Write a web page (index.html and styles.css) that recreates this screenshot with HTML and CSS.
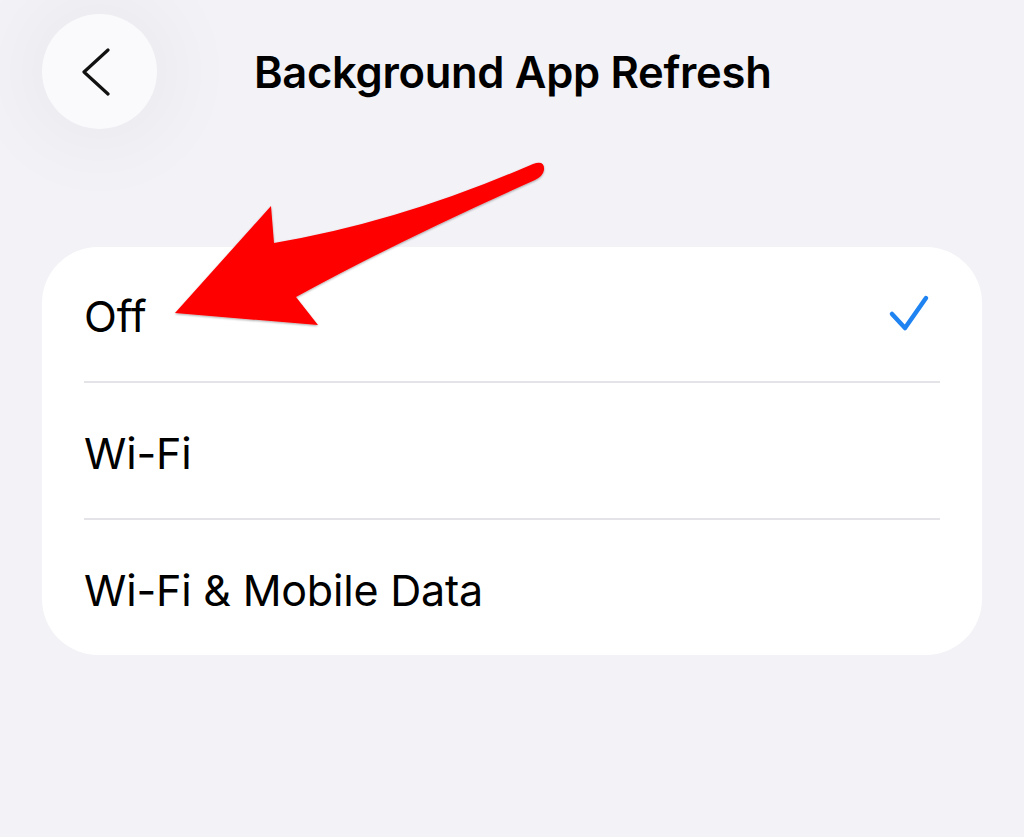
FILE: index.html
```html
<!DOCTYPE html>
<html>
<head>
<meta charset="utf-8">
<link rel="stylesheet" href="styles.css">
</head>
<body>
<div class="page">
  <header class="nav">
    <button class="back" aria-label="Back">
      <svg width="40" height="60" viewBox="0 0 40 60"><path d="M26 8 L2 30 L26 52" fill="none" stroke="#111" stroke-width="3.2" stroke-linecap="round" stroke-linejoin="round"/></svg>
    </button>
    <h1 class="title">Background App Refresh</h1>
  </header>
  <section class="card">
    <div class="row first"><span class="label">Off</span>
      <svg class="check" width="44" height="40" viewBox="0 0 44 40"><path d="M4 20 L17 34 L38 4" fill="none" stroke="#1f84f2" stroke-width="4.5" stroke-linecap="round" stroke-linejoin="round"/></svg>
    </div>
    <div class="sep"></div>
    <div class="row"><span class="label">Wi-Fi</span></div>
    <div class="sep"></div>
    <div class="row"><span class="label">Wi-Fi &amp; Mobile Data</span></div>
  </section>
  <svg class="arrow" width="1024" height="837" viewBox="0 0 1024 837">
    <defs>
      <filter id="sh" x="-10%" y="-10%" width="120%" height="120%">
        <feDropShadow dx="0" dy="1" stdDeviation="1" flood-color="#000" flood-opacity="0.35"/>
      </filter>
    </defs>
    <path filter="url(#sh)" fill="#ff0000" d="M274 243 Q 400 222 533 164 Q 545 160 544 170 Q 543 176 535 180 Q 400 240 296 297 L 318 325 L 175 313 L 271 206 Z"/>
  </svg>
</div>
</body>
</html>
```

FILE: styles.css
```css
html, body {
  margin: 0;
  padding: 0;
  background: #f2f2f7;
}
body {
  font-family: Inter, "Noto Sans", "Liberation Sans", sans-serif;
  color: #000;
  width: 1024px;
  height: 837px;
  overflow: hidden;
}
.page {
  position: relative;
  width: 1024px;
  height: 837px;
}
.nav {
  display: flex;
  align-items: center;
  padding: 14px 0 0 42px;
  height: 115px;
}
.back {
  width: 115px;
  height: 115px;
  border-radius: 50%;
  border: none;
  background: #fafafc;
  box-shadow: 0 0 80px 20px rgba(0, 0, 0, 0.04);
  display: flex;
  align-items: center;
  justify-content: center;
  padding: 0 0 0 4px;
  flex: none;
}
.title {
  margin: 0 0 0 97px;
  font-size: 43.5px;
  font-weight: 600;
  letter-spacing: -0.3px;
}
.card {
  margin: 118px 42px 0 42px;
  background: #fff;
  border-radius: 56px;
  padding: 0 42px;
}
.row {
  height: 135px;
  display: flex;
  align-items: center;
  justify-content: space-between;
}
.row.first {
  height: 134px;
}
.label {
  font-size: 43px;
  font-weight: 400;
  letter-spacing: -0.2px;
  padding-top: 4px;
}
.check {
  margin-right: 8px;
  margin-top: 0;
}
.sep {
  height: 2px;
  background: #e3e3e8;
}
.arrow {
  position: absolute;
  left: 0;
  top: 0;
  pointer-events: none;
}
```
